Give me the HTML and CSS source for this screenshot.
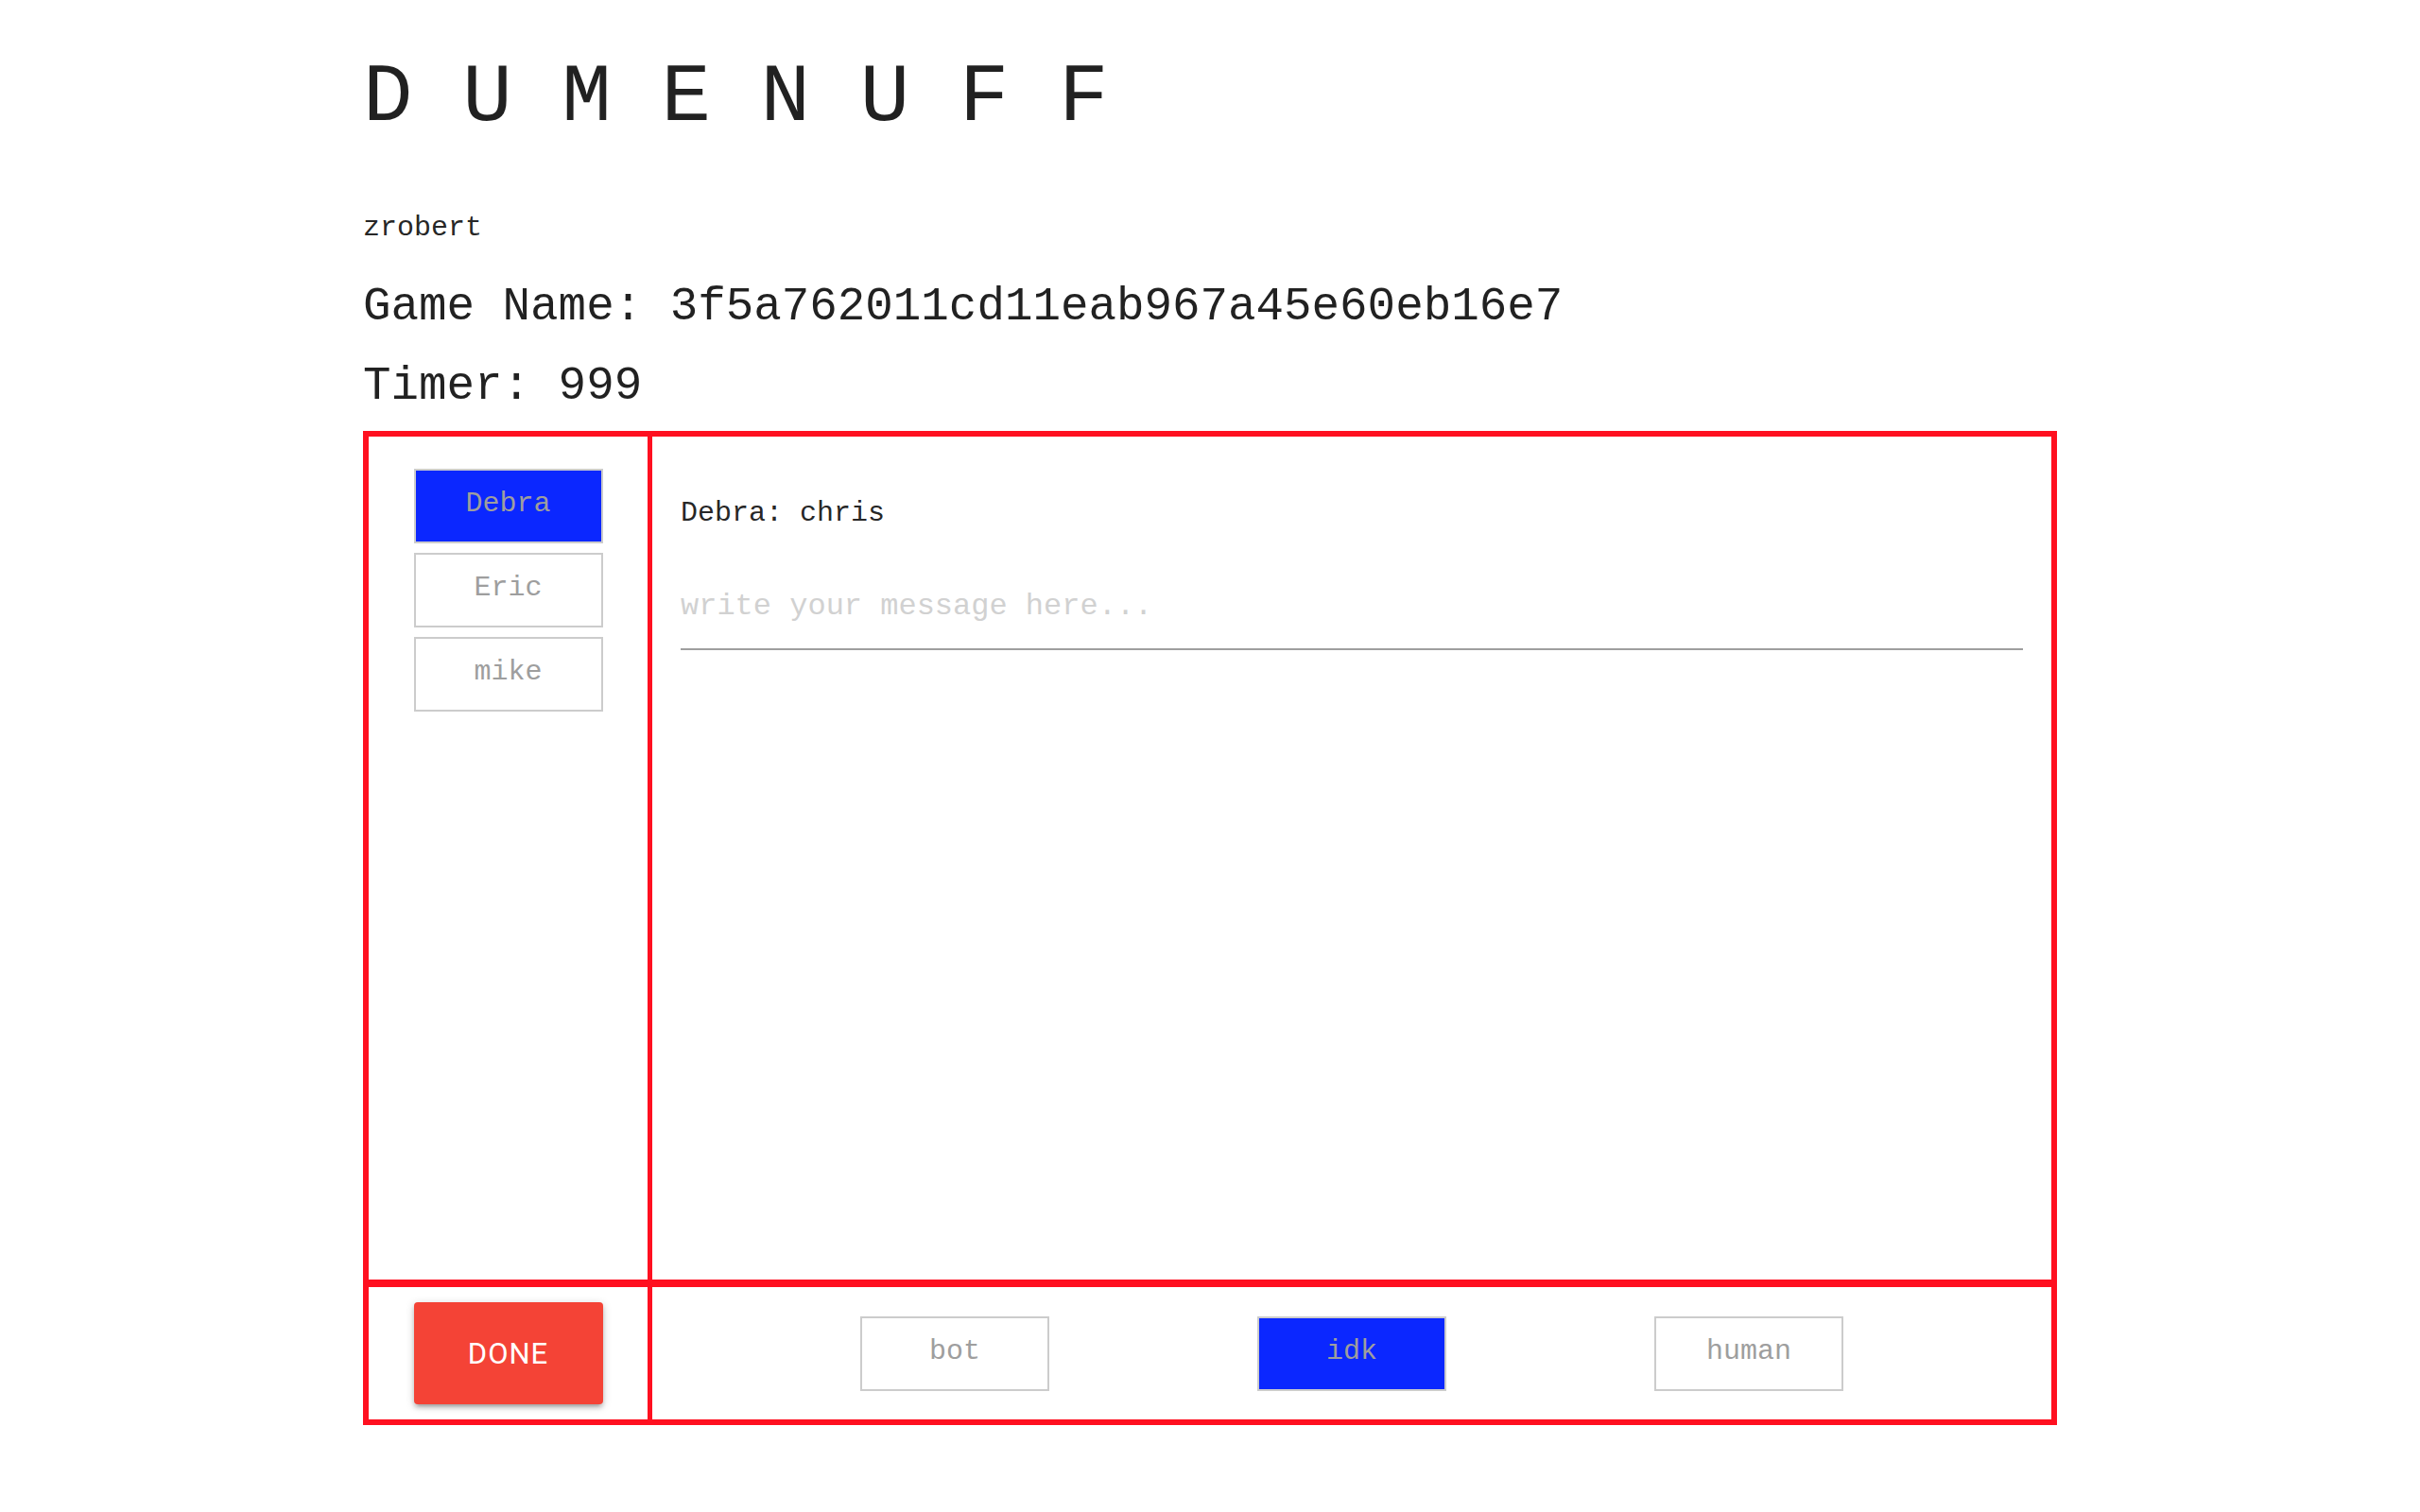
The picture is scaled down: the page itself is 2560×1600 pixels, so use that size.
FILE: index.html
```html
<!DOCTYPE html>
<html lang="en">
<head>
<meta charset="utf-8">
<title>DUMENUFF</title>
<link rel="stylesheet" href="styles.css">
</head>
<body>
<div class="container">
  <h1 class="title">D U M E N U F F</h1>
  <p class="user">zrobert</p>
  <h2 class="info game">Game Name: 3f5a762011cd11eab967a45e60eb16e7</h2>
  <h2 class="info timer">Timer: 999</h2>
  <div class="board">
    <div class="players">
      <div class="choice active">Debra</div>
      <div class="choice">Eric</div>
      <div class="choice">mike</div>
    </div>
    <div class="chat">
      <p class="message">Debra: chris</p>
      <input class="message-input" type="text" placeholder="write your message here...">
    </div>
    <div class="done-cell">
      <button class="done">Done</button>
    </div>
    <div class="verdicts">
      <div class="choice">bot</div>
      <div class="choice active">idk</div>
      <div class="choice">human</div>
    </div>
  </div>
</div>
</body>
</html>
```
FILE: styles.css
```css
* {
  box-sizing: border-box;
}

body {
  margin: 0;
  background: #fff;
  color: rgba(0, 0, 0, 0.87);
  font-family: "Liberation Mono", monospace;
}

.container {
  width: 1792px;
  margin: 0 auto;
}

.title {
  margin: 56px 0 0;
  font-size: 87.6px;
  line-height: 96.36px;
  font-weight: 400;
  white-space: pre;
}

.user {
  margin: 66.8px 0 0;
  font-size: 30px;
  line-height: 45px;
}

.info {
  margin: 0;
  font-size: 49.2px;
  line-height: 54.12px;
  font-weight: 400;
}

.game {
  margin-top: 34.3px;
}

.timer {
  margin-top: 29.2px;
}

.board {
  margin-top: 20.6px;
  display: grid;
  grid-template-columns: 295px 1480px;
  grid-template-rows: 892px 140px;
  gap: 8px 5px;
  border: 6px solid #ff1020;
  background: #ff1020;
}

.players,
.chat,
.done-cell,
.verdicts {
  background: #fff;
}

.players {
  display: flex;
  flex-direction: column;
  align-items: center;
  gap: 10px;
  padding-top: 34px;
}

.choice {
  width: 200px;
  height: 79px;
  border: 2px solid #cccccc;
  background: #fff;
  color: #9e9e9e;
  text-align: center;
  font-size: 30px;
  line-height: 46px;
  padding-top: 12px;
}

.choice.active {
  background: #0b27ff;
}

.chat {
  padding: 0 30px;
}

.message {
  margin: 58.5px 0 0;
  font-size: 30px;
  line-height: 45px;
}

.message-input {
  display: block;
  width: 100%;
  height: 92px;
  margin: 30.5px 0 0;
  padding: 0;
  border: none;
  border-bottom: 2px solid #9e9e9e;
  background: transparent;
  outline: none;
  font-family: "Liberation Mono", monospace;
  font-size: 32px;
  color: rgba(0, 0, 0, 0.87);
}

.message-input::placeholder {
  color: #d1d1d1;
}

.done-cell {
  display: flex;
  align-items: center;
  justify-content: center;
}

.done {
  width: 200px;
  height: 108px;
  border: none;
  border-radius: 4px;
  background: #f44336;
  color: #fff;
  font-family: Roboto, "Noto Sans", sans-serif;
  font-size: 31px;
  letter-spacing: 1px;
  text-transform: uppercase;
  box-shadow: 0 4px 4px 0 rgba(0, 0, 0, 0.14), 0 6px 2px -4px rgba(0, 0, 0, 0.12), 0 2px 10px 0 rgba(0, 0, 0, 0.2);
}

.verdicts {
  display: flex;
  align-items: center;
  justify-content: space-evenly;
}
```
